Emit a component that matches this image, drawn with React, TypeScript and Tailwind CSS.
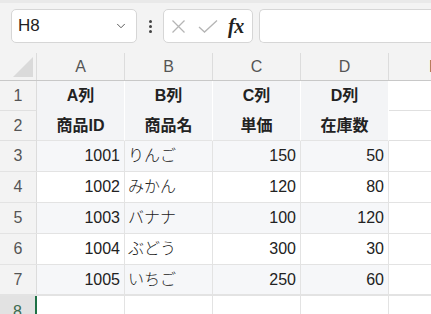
import { ChevronDown } from 'lucide-react';

const FONT = "font-['Liberation_Sans','Noto_Sans_CJK_JP',sans-serif]";

type Row = { n: number; h: string; cells: [string, string, string, string]; bg: string };

const rows: Row[] = [
  { n: 3, h: 'h-[31px]', cells: ['1001', 'りんご', '150', '50'], bg: 'bg-[#f6f7f9]' },
  { n: 4, h: 'h-[31px]', cells: ['1002', 'みかん', '120', '80'], bg: 'bg-white' },
  { n: 5, h: 'h-[31px]', cells: ['1003', 'バナナ', '100', '120'], bg: 'bg-[#f6f7f9]' },
  { n: 6, h: 'h-[31px]', cells: ['1004', 'ぶどう', '300', '30'], bg: 'bg-white' },
  { n: 7, h: 'h-[31px]', cells: ['1005', 'いちご', '250', '60'], bg: 'bg-[#f6f7f9]' },
];

function RowHead({ n, className = '' }: { n: number; className?: string }) {
  return (
    <div
      className={`w-[37px] shrink-0 flex items-center justify-center bg-[#f3f3f3] border-r border-[#dcdcdc] text-[16px] text-[#555] ${className}`}
    >
      {n}
    </div>
  );
}

export default function App() {
  return (
    <div className={`w-[431px] h-[314px] overflow-hidden bg-white ${FONT}`}>
      {/* ── Formula bar ─────────────────────────────── */}
      <div className="h-[53px] bg-[#f3f3f3] border-t-[3px] border-[#e9e9e9] flex items-start pt-[6px]">
        <div className="ml-[11px] w-[126px] h-[34px] bg-white border border-[#d6d6d6] rounded-[5px] flex items-center pl-[6px] pr-[8px]">
          <span className="text-[17px] text-[#222] flex-1">H8</span>
          <ChevronDown size={14} strokeWidth={1.5} className="text-[#444]" />
        </div>
        <div className="w-[26px] h-[34px] flex flex-col items-center justify-center gap-[2px]">
          <span className="w-[3px] h-[3px] bg-[#444] rounded-full" />
          <span className="w-[3px] h-[3px] bg-[#444] rounded-full" />
          <span className="w-[3px] h-[3px] bg-[#444] rounded-full" />
        </div>
        <div className="w-[90px] h-[34px] bg-white border border-[#d6d6d6] rounded-[5px] flex items-center pl-[6px]">
          <svg width="15" height="15" viewBox="0 0 15 15" className="ml-[1px]">
            <path d="M1.5 1.5 L13.5 13.5 M13.5 1.5 L1.5 13.5" stroke="#b5b5b5" strokeWidth="1.3" fill="none" />
          </svg>
          <svg width="20" height="15" viewBox="0 0 20 15" className="ml-[12px]">
            <path d="M1 8 L6.5 13 L19 1.5" stroke="#b5b5b5" strokeWidth="1.3" fill="none" />
          </svg>
          <span className="ml-[10px] text-[20px] leading-none italic font-bold font-['Liberation_Serif',serif] text-[#222] tracking-[-0.5px]">
            fx
          </span>
        </div>
        <div className="ml-[6px] flex-1 h-[34px] bg-white border border-[#d6d6d6] border-r-0 rounded-l-[5px]" />
      </div>

      {/* ── Column headers ──────────────────────────── */}
      <div className="h-[28px] flex bg-[#f3f3f3] border-b border-[#c8c8c8]">
        <div className="w-[37px] shrink-0 border-r border-[#dcdcdc] relative">
          <div className="absolute right-[3px] bottom-[3px] w-0 h-0 border-l-[20px] border-l-transparent border-b-[20px] border-b-[#dadada]" />
        </div>
        {['A', 'B', 'C', 'D'].map((c) => (
          <div
            key={c}
            className="w-[88px] shrink-0 border-r border-[#dcdcdc] flex items-center justify-center text-[16px] text-[#555]"
          >
            {c}
          </div>
        ))}
        <div className="flex-1 pl-[40px] flex items-center text-[16px] text-[#555]">E</div>
      </div>

      {/* ── Header rows 1-2 ─────────────────────────── */}
      <div className="flex h-[60px]">
        <div className="flex flex-col">
          <RowHead n={1} className="h-[30px] border-b border-b-[#e0e0e0]" />
          <RowHead n={2} className="h-[30px] border-b border-b-[#e0e0e0]" />
        </div>
        {[
          ['A列', '商品ID'],
          ['B列', '商品名'],
          ['C列', '単価'],
          ['D列', '在庫数'],
        ].map(([a, b]) => (
          <div
            key={a}
            className="w-[88px] shrink-0 bg-[#f3f4f6] border-r border-white border-b border-b-[#e4e4e4] flex flex-col text-[16px] text-[#222] font-bold"
          >
            <div className="h-[30px] flex items-center justify-center">{a}</div>
            <div className="h-[29px] flex items-center justify-center">{b}</div>
          </div>
        ))}
        <div className="flex-1 flex flex-col">
          <div className="h-[30px] border-b border-[#e0e0e0]" />
          <div className="h-[30px] border-b border-[#e0e0e0]" />
        </div>
      </div>

      {/* ── Data rows ───────────────────────────────── */}
      {rows.map((r) => (
        <div
          key={r.n}
          className={`flex ${r.h} ${r.n === 7 ? 'border-b-2' : 'border-b'} border-[#e3e3e3]`}
        >
          <RowHead n={r.n} />
          <div className={`w-[88px] shrink-0 ${r.bg} border-r border-[#e3e3e3] flex items-center justify-end pr-[4px] text-[16px] text-[#222]`}>
            {r.cells[0]}
          </div>
          <div className={`w-[88px] shrink-0 ${r.bg} border-r border-[#e3e3e3] flex items-center pl-[3px] text-[16px] text-[#222] font-light`}>
            {r.cells[1]}
          </div>
          <div className={`w-[88px] shrink-0 ${r.bg} border-r border-[#e3e3e3] flex items-center justify-end pr-[4px] text-[16px] text-[#222]`}>
            {r.cells[2]}
          </div>
          <div className={`w-[88px] shrink-0 ${r.bg} border-r border-[#e3e3e3] flex items-center justify-end pr-[4px] text-[16px] text-[#222]`}>
            {r.cells[3]}
          </div>
          <div className="flex-1" />
        </div>
      ))}

      {/* ── Row 8 (selected row) ────────────────────── */}
      <div className="flex h-[31px]">
        <div className="w-[37px] shrink-0 flex items-center justify-center bg-[#e2e2e2] border-r-2 border-[#1e7145] text-[16px] text-[#3c6b4f]">
          8
        </div>
        {[0, 1, 2, 3].map((i) => (
          <div key={i} className="w-[88px] shrink-0 border-r border-[#e3e3e3]" />
        ))}
      </div>
    </div>
  );
}
